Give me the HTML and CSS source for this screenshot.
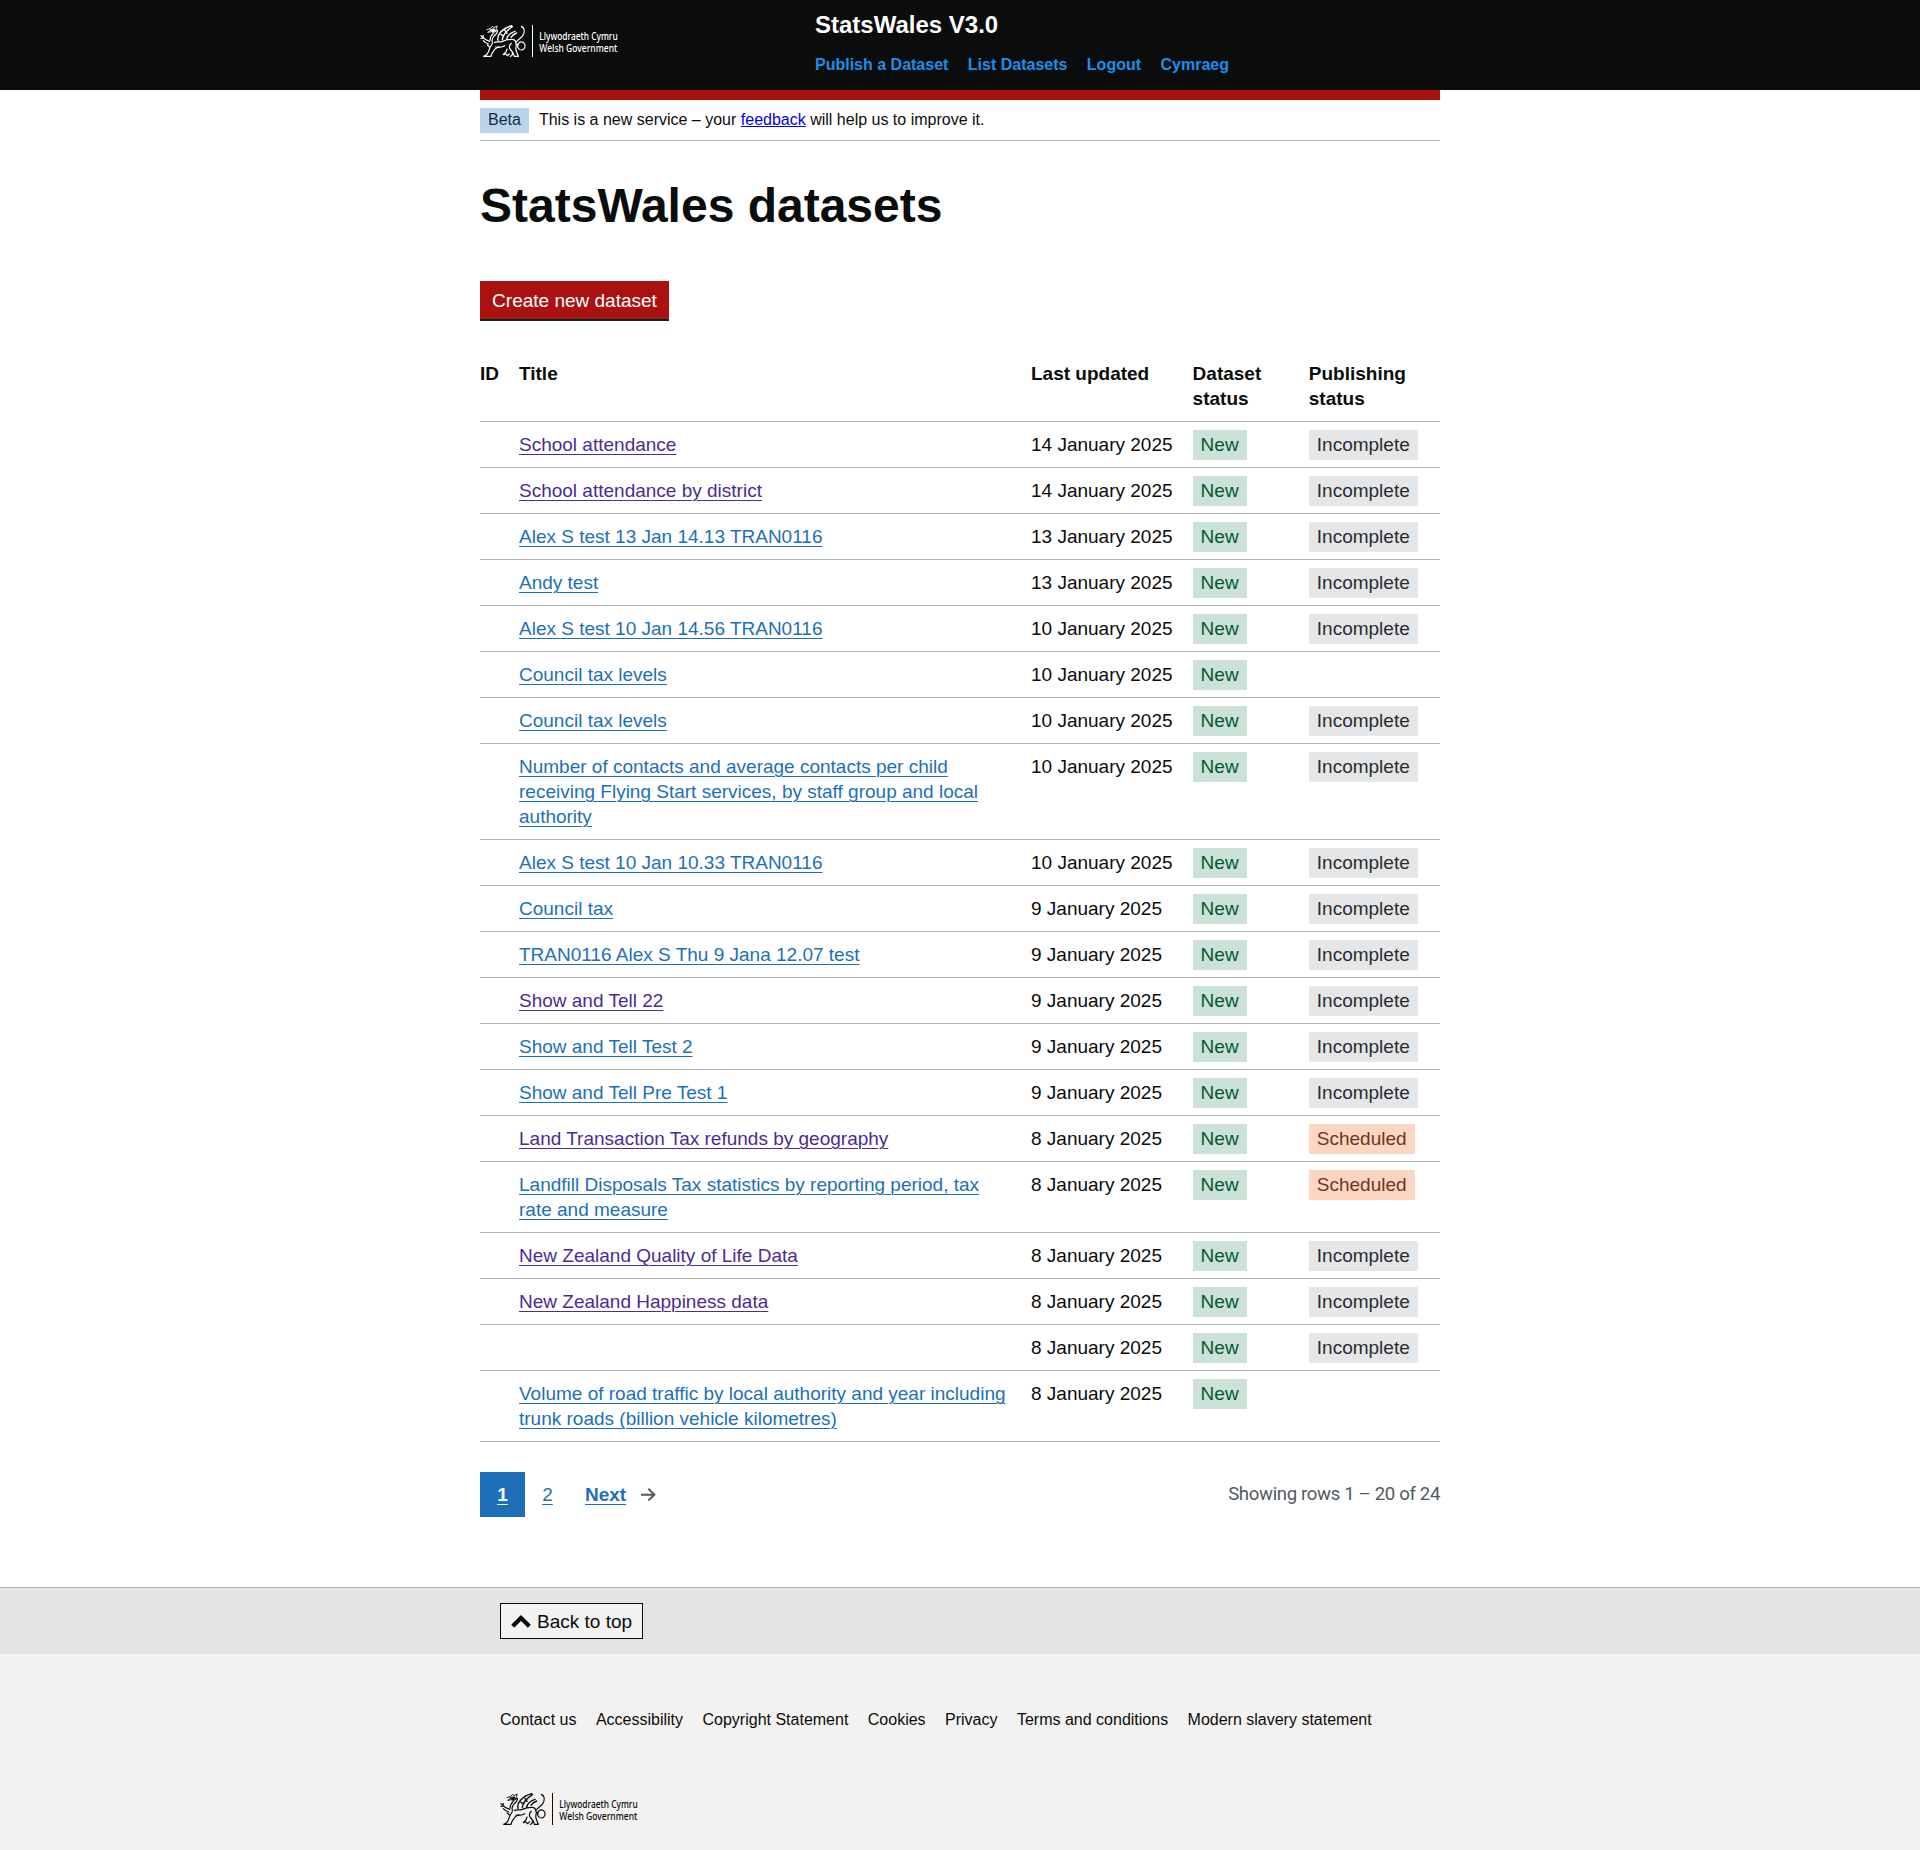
FILE: index.html
```html
<!DOCTYPE html>
<html lang="en">
<head>
<meta charset="utf-8">
<title>StatsWales datasets</title>
<link rel="stylesheet" href="styles.css">
</head>
<body>
<svg width="0" height="0" class="defs" aria-hidden="true">
  <symbol id="dragon" viewBox="0 0 140 96">
    <g fill="none" stroke="currentColor" stroke-width="3.6" stroke-linecap="round" stroke-linejoin="round">
      <path d="M21 14l11-4 6-6 3 4 11-5-3 8 2 5-7 6-8-2-13 2 8-5" stroke-width="2.6"/>
      <path d="M30 14l13-3 5 7-10 4z" fill="currentColor" stroke-width="2"/>
      <path d="M52 16c1 7-4 12-9 16-6 6-8 13-6 20M40 25c-7 6-10 12-10 21"/>
      <path d="M29 49c-9-2-16-7-20-12L3 32M9 37l1-5M10 39l-7 1M26 57c-7-2-12-5-16-10"/>
      <path d="M37 55c-2 7-7 9-8 15l-4 11-5 8-9 5h22l3-9 9-13 11-7M22 60l7 7"/>
      <path d="M54 46c-3-14 4-20 9-26 8-9 18-14 32-18M67 44c1-13 9-25 30-39M80 43c2-12 10-19 25-24M93 37c4-7 9-10 17-13M63 28l8 5M75 16l6 9" stroke-width="4.2"/>
      <path d="M43 52c9-2 16 0 24-3 9-4 17-6 27-6 10-1 14 6 14 13M47 66c10 2 20 0 27-4"/>
      <path d="M94 55c-5 4-7 9-5 15l7 9 2 9-7 7M109 57c0 8-3 12-1 19l4 10 3 8h-12l-4-11-8-9M81 72l-3 9-8 7M70 89l8-2 4 5 6-5"/>
      <path d="M111 57c2 13 6 19 14 18 9-2 12-10 9-18-4-8-15-9-19-1-4 8-1 13 2 16M109 51c5-9 17-11 22-24 3-9 2-19-7-23M124 4l7 7" stroke-width="3.4"/>
    </g>
  </symbol>
</svg>

<header class="header">
  <div class="container header-inner">
    <svg class="logo" viewBox="0 0 414 96">
      <use href="#dragon" width="140" height="96"/>
      <rect x="156" y="0" width="3" height="96" fill="currentColor"/>
      <text x="178" y="44" textLength="235" lengthAdjust="spacingAndGlyphs">Llywodraeth Cymru</text>
      <text x="178" y="82" textLength="234" lengthAdjust="spacingAndGlyphs">Welsh Government</text>
    </svg>
    <div class="header-content">
      <div class="service">StatsWales V3.0</div>
      <nav class="header-nav"><a>Publish a Dataset</a><a>List Datasets</a><a>Logout</a><a>Cymraeg</a></nav>
    </div>
  </div>
</header>

<div class="container">
  <div class="red-bar"></div>
  <div class="phase"><strong class="phase-tag">Beta</strong><span>This is a new service – your <a href="#">feedback</a> will help us to improve it.</span></div>
  <main>
    <h1>StatsWales datasets</h1>
    <button class="button">Create new dataset</button>
    <table>
      <colgroup><col class="c-id"><col class="c-title"><col class="c-date"><col class="c-status"><col class="c-pub"></colgroup>
      <thead><tr><th>ID</th><th>Title</th><th>Last updated</th><th>Dataset status</th><th>Publishing status</th></tr></thead>
      <tbody>
        <tr><td></td><td><a class="link visited">School attendance</a></td><td>14 January 2025</td><td><span class="tag green">New</span></td><td><span class="tag grey">Incomplete</span></td></tr>
        <tr><td></td><td><a class="link visited">School attendance by district</a></td><td>14 January 2025</td><td><span class="tag green">New</span></td><td><span class="tag grey">Incomplete</span></td></tr>
        <tr><td></td><td><a class="link">Alex S test 13 Jan 14.13 TRAN0116</a></td><td>13 January 2025</td><td><span class="tag green">New</span></td><td><span class="tag grey">Incomplete</span></td></tr>
        <tr><td></td><td><a class="link">Andy test</a></td><td>13 January 2025</td><td><span class="tag green">New</span></td><td><span class="tag grey">Incomplete</span></td></tr>
        <tr><td></td><td><a class="link">Alex S test 10 Jan 14.56 TRAN0116</a></td><td>10 January 2025</td><td><span class="tag green">New</span></td><td><span class="tag grey">Incomplete</span></td></tr>
        <tr><td></td><td><a class="link">Council tax levels</a></td><td>10 January 2025</td><td><span class="tag green">New</span></td><td></td></tr>
        <tr><td></td><td><a class="link">Council tax levels</a></td><td>10 January 2025</td><td><span class="tag green">New</span></td><td><span class="tag grey">Incomplete</span></td></tr>
        <tr><td></td><td><a class="link">Number of contacts and average contacts per child receiving Flying Start services, by staff group and local authority</a></td><td>10 January 2025</td><td><span class="tag green">New</span></td><td><span class="tag grey">Incomplete</span></td></tr>
        <tr><td></td><td><a class="link">Alex S test 10 Jan 10.33 TRAN0116</a></td><td>10 January 2025</td><td><span class="tag green">New</span></td><td><span class="tag grey">Incomplete</span></td></tr>
        <tr><td></td><td><a class="link">Council tax</a></td><td>9 January 2025</td><td><span class="tag green">New</span></td><td><span class="tag grey">Incomplete</span></td></tr>
        <tr><td></td><td><a class="link">TRAN0116 Alex S Thu 9 Jana 12.07 test</a></td><td>9 January 2025</td><td><span class="tag green">New</span></td><td><span class="tag grey">Incomplete</span></td></tr>
        <tr><td></td><td><a class="link visited">Show and Tell 22</a></td><td>9 January 2025</td><td><span class="tag green">New</span></td><td><span class="tag grey">Incomplete</span></td></tr>
        <tr><td></td><td><a class="link">Show and Tell Test 2</a></td><td>9 January 2025</td><td><span class="tag green">New</span></td><td><span class="tag grey">Incomplete</span></td></tr>
        <tr><td></td><td><a class="link">Show and Tell Pre Test 1</a></td><td>9 January 2025</td><td><span class="tag green">New</span></td><td><span class="tag grey">Incomplete</span></td></tr>
        <tr><td></td><td><a class="link visited">Land Transaction Tax refunds by geography</a></td><td>8 January 2025</td><td><span class="tag green">New</span></td><td><span class="tag orange">Scheduled</span></td></tr>
        <tr><td></td><td><a class="link">Landfill Disposals Tax statistics by reporting period, tax rate and measure</a></td><td>8 January 2025</td><td><span class="tag green">New</span></td><td><span class="tag orange">Scheduled</span></td></tr>
        <tr><td></td><td><a class="link visited">New Zealand Quality of Life Data</a></td><td>8 January 2025</td><td><span class="tag green">New</span></td><td><span class="tag grey">Incomplete</span></td></tr>
        <tr><td></td><td><a class="link visited">New Zealand Happiness data</a></td><td>8 January 2025</td><td><span class="tag green">New</span></td><td><span class="tag grey">Incomplete</span></td></tr>
        <tr><td></td><td></td><td>8 January 2025</td><td><span class="tag green">New</span></td><td><span class="tag grey">Incomplete</span></td></tr>
        <tr><td></td><td><a class="link">Volume of road traffic by local authority and year including trunk roads (billion vehicle kilometres)</a></td><td>8 January 2025</td><td><span class="tag green">New</span></td><td></td></tr>
      </tbody>
    </table>
    <div class="pager">
      <nav class="pages">
        <a class="page current"><span class="link">1</span></a>
        <a class="page"><span class="link">2</span></a>
        <a class="next"><span class="link">Next</span><svg width="15" height="13" viewBox="0 0 15 13"><path d="m8.107-.0078125-1.4136 1.414 4.2926 4.293h-12.986v2h12.896l-4.1855 3.9766 1.377 1.4492 6.7441-6.4062-6.7246-6.7266z" fill="#505a5f"/></svg></a>
      </nav>
      <span class="showing">Showing rows 1 – 20 of 24</span>
    </div>
  </main>
</div>

<footer>
  <div class="top-band">
    <div class="container indent">
      <a class="back-top"><svg width="20" height="13" viewBox="0 0 20 13"><path d="M1.7 11.3 10 3l8.3 8.3" fill="none" stroke="#0b0c0c" stroke-width="4.2"/></svg>Back to top</a>
    </div>
  </div>
  <div class="container indent">
    <nav class="footer-nav"><a>Contact us</a><a>Accessibility</a><a>Copyright Statement</a><a>Cookies</a><a>Privacy</a><a>Terms and conditions</a><a>Modern slavery statement</a></nav>
    <svg class="logo" viewBox="0 0 414 96">
      <use href="#dragon" width="140" height="96"/>
      <rect x="156" y="0" width="3" height="96" fill="currentColor"/>
      <text x="178" y="44" textLength="235" lengthAdjust="spacingAndGlyphs">Llywodraeth Cymru</text>
      <text x="178" y="82" textLength="234" lengthAdjust="spacingAndGlyphs">Welsh Government</text>
    </svg>
  </div>
</footer>
</body>
</html>
```
FILE: styles.css
```css
* { box-sizing: border-box; }
body {
  margin: 0;
  min-height: 1850px;
  display: flex;
  flex-direction: column;
  font: 19px/25px "Liberation Sans", Arial, sans-serif;
  color: #0b0c0c;
  background: #fff;
}
.defs { position: absolute; }
.container { width: 960px; margin: 0 auto; }
.logo { display: block; width: 138px; height: 32px; overflow: visible; fill: currentColor; }
.logo text { font: 500 32px "Noto Sans", sans-serif; }

.header { height: 90px; background: #0b0c0c; color: #fff; }
.header-inner { display: flex; padding-top: 10px; }
.header .logo { margin: 15px 197px 0 0; }
.service { font-size: 24px; line-height: 30px; font-weight: bold; }
.header-nav {
  display: flex;
  gap: 19.45px;
  margin-top: 15px;
  font-size: 16px;
  line-height: 20px;
  font-weight: bold;
  color: #1d8feb;
}
.red-bar { height: 10px; background: #a11; }
.phase {
  display: flex;
  align-items: center;
  gap: 10px;
  height: 41px;
  border-bottom: 1px solid #b1b4b6;
  font-size: 16px;
  line-height: 20px;
}
.phase a { color: #00e; }
.phase-tag { padding: 2px 8px 3px; font-weight: normal; background: #bbd4ea; color: #0c2d4a; }

h1 { margin: 40px 0 50px; font-size: 48px; line-height: 50px; }
.button {
  display: block;
  width: 189px;
  height: 38px;
  padding: 1px 0 0;
  border: 0;
  font: 19px/37px "Liberation Sans", Arial, sans-serif;
  color: #fff;
  background: #a11;
  box-shadow: 0 2px 0 #002d18;
}
table { width: 960px; margin-top: 32px; table-layout: fixed; border-collapse: separate; border-spacing: 0; }
.c-id { width: 39px; }
.c-title { width: 512px; }
.c-date { width: 161.6px; }
.c-status { width: 116.2px; }
th, td { height: 46px; padding: 10px 20px 10px 0; vertical-align: top; text-align: left; border-bottom: 1px solid #b1b4b6; }
td:nth-child(3) { white-space: nowrap; padding-right: 0; }
th:first-child { padding-right: 0; }
td:last-child { padding-right: 0; }
.link { color: #1d70b8; text-decoration: underline; text-decoration-thickness: 1px; text-underline-offset: 0.1578em; }
.visited { color: #4c2c92; }
.tag { display: block; width: max-content; margin: -2px 0 -3px; padding: 2px 8px 3px; }
.green { background: #cce2d8; color: #005a30; }
.grey { background: #e5e6e7; color: #282d30; }
.orange { background: #fcd6c3; color: #6e3619; }

.pager { display: flex; justify-content: space-between; align-items: center; height: 45px; margin-top: 30px; }
.pages { display: flex; }
.page { width: 45px; padding: 10px 0; text-align: center; }
.current { background: #1d70b8; font-weight: bold; }
.current .link { color: #fff; }
.next { display: flex; align-items: center; gap: 15px; padding: 10px 15px; font-weight: bold; }
.showing { font-family: Roboto, sans-serif; font-size: 18.6px; letter-spacing: -0.35px; color: #505a5f; }

footer { flex: 1; margin-top: 70px; background: #f3f2f1; border-top: 1px solid #b1b4b6; }
.top-band { height: 66px; padding-top: 15px; background: #e4e4e4; }
.indent { padding-left: 20px; }
.back-top {
  display: flex;
  align-items: center;
  gap: 6px;
  width: 143px;
  height: 36px;
  padding-left: 10px;
  border: 1px solid #0b0c0c;
  background: #f3f2f1;
}
.footer-nav { display: flex; gap: 19.45px; padding-top: 56px; margin-bottom: 63px; font-size: 16px; line-height: 20px; }
```
